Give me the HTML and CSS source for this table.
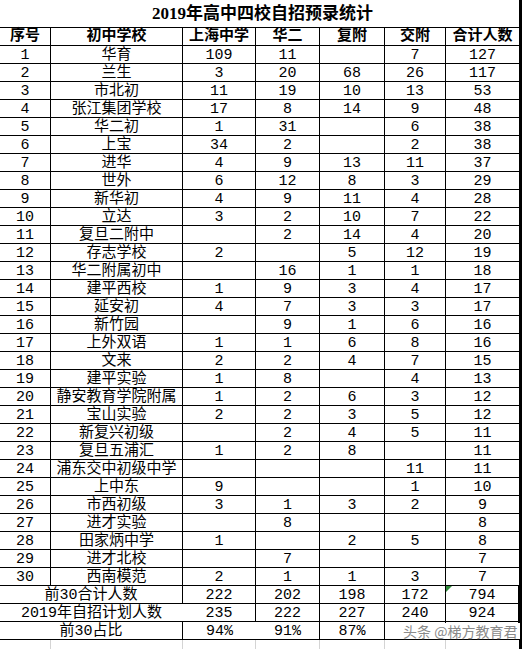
FILE: index.html
```html
<!DOCTYPE html>
<html lang="zh-CN">
<head>
<meta charset="utf-8">
<title>2019年高中四校自招预录统计</title>
<link rel="stylesheet" href="styles.css">
</head>
<body>
<div class="page">
  <div class="title">2019年高中四校自招预录统计</div>
  <div class="sheet">
    <div class="c h">序号</div><div class="c h">初中学校</div><div class="c h">上海中学</div><div class="c h">华二</div><div class="c h">复附</div><div class="c h">交附</div><div class="c h">合计人数</div>

    <div class="c">1</div><div class="c">华育</div><div class="c">109</div><div class="c">11</div><div class="c"></div><div class="c">7</div><div class="c">127</div>
    <div class="c">2</div><div class="c">兰生</div><div class="c">3</div><div class="c">20</div><div class="c">68</div><div class="c">26</div><div class="c">117</div>
    <div class="c">3</div><div class="c">市北初</div><div class="c">11</div><div class="c">19</div><div class="c">10</div><div class="c">13</div><div class="c">53</div>
    <div class="c">4</div><div class="c">张江集团学校</div><div class="c">17</div><div class="c">8</div><div class="c">14</div><div class="c">9</div><div class="c">48</div>
    <div class="c">5</div><div class="c">华二初</div><div class="c">1</div><div class="c">31</div><div class="c"></div><div class="c">6</div><div class="c">38</div>
    <div class="c">6</div><div class="c">上宝</div><div class="c">34</div><div class="c">2</div><div class="c"></div><div class="c">2</div><div class="c">38</div>
    <div class="c">7</div><div class="c">进华</div><div class="c">4</div><div class="c">9</div><div class="c">13</div><div class="c">11</div><div class="c">37</div>
    <div class="c">8</div><div class="c">世外</div><div class="c">6</div><div class="c">12</div><div class="c">8</div><div class="c">3</div><div class="c">29</div>
    <div class="c">9</div><div class="c">新华初</div><div class="c">4</div><div class="c">9</div><div class="c">11</div><div class="c">4</div><div class="c">28</div>
    <div class="c">10</div><div class="c">立达</div><div class="c">3</div><div class="c">2</div><div class="c">10</div><div class="c">7</div><div class="c">22</div>
    <div class="c">11</div><div class="c">复旦二附中</div><div class="c"></div><div class="c">2</div><div class="c">14</div><div class="c">4</div><div class="c">20</div>
    <div class="c">12</div><div class="c">存志学校</div><div class="c">2</div><div class="c"></div><div class="c">5</div><div class="c">12</div><div class="c">19</div>
    <div class="c">13</div><div class="c">华二附属初中</div><div class="c"></div><div class="c">16</div><div class="c">1</div><div class="c">1</div><div class="c">18</div>
    <div class="c">14</div><div class="c">建平西校</div><div class="c">1</div><div class="c">9</div><div class="c">3</div><div class="c">4</div><div class="c">17</div>
    <div class="c">15</div><div class="c">延安初</div><div class="c">4</div><div class="c">7</div><div class="c">3</div><div class="c">3</div><div class="c">17</div>
    <div class="c">16</div><div class="c">新竹园</div><div class="c"></div><div class="c">9</div><div class="c">1</div><div class="c">6</div><div class="c">16</div>
    <div class="c">17</div><div class="c">上外双语</div><div class="c">1</div><div class="c">1</div><div class="c">6</div><div class="c">8</div><div class="c">16</div>
    <div class="c">18</div><div class="c">文来</div><div class="c">2</div><div class="c">2</div><div class="c">4</div><div class="c">7</div><div class="c">15</div>
    <div class="c">19</div><div class="c">建平实验</div><div class="c">1</div><div class="c">8</div><div class="c"></div><div class="c">4</div><div class="c">13</div>
    <div class="c">20</div><div class="c">静安教育学院附属</div><div class="c">1</div><div class="c">2</div><div class="c">6</div><div class="c">3</div><div class="c">12</div>
    <div class="c">21</div><div class="c">宝山实验</div><div class="c">2</div><div class="c">2</div><div class="c">3</div><div class="c">5</div><div class="c">12</div>
    <div class="c">22</div><div class="c">新复兴初级</div><div class="c"></div><div class="c">2</div><div class="c">4</div><div class="c">5</div><div class="c">11</div>
    <div class="c">23</div><div class="c">复旦五浦汇</div><div class="c">1</div><div class="c">2</div><div class="c">8</div><div class="c"></div><div class="c">11</div>
    <div class="c">24</div><div class="c">浦东交中初级中学</div><div class="c"></div><div class="c"></div><div class="c"></div><div class="c">11</div><div class="c">11</div>
    <div class="c">25</div><div class="c">上中东</div><div class="c">9</div><div class="c"></div><div class="c"></div><div class="c">1</div><div class="c">10</div>
    <div class="c">26</div><div class="c">市西初级</div><div class="c">3</div><div class="c">1</div><div class="c">3</div><div class="c">2</div><div class="c">9</div>
    <div class="c">27</div><div class="c">进才实验</div><div class="c"></div><div class="c">8</div><div class="c"></div><div class="c"></div><div class="c">8</div>
    <div class="c">28</div><div class="c">田家炳中学</div><div class="c">1</div><div class="c"></div><div class="c">2</div><div class="c">5</div><div class="c">8</div>
    <div class="c">29</div><div class="c">进才北校</div><div class="c"></div><div class="c">7</div><div class="c"></div><div class="c"></div><div class="c">7</div>
    <div class="c">30</div><div class="c">西南模范</div><div class="c">2</div><div class="c">1</div><div class="c">1</div><div class="c">3</div><div class="c">7</div>

    <div class="c span2">前30合计人数</div><div class="c">222</div><div class="c">202</div><div class="c">198</div><div class="c">172</div><div class="c flag">794</div>
    <div class="c span2">2019年自招计划人数</div><div class="c">235</div><div class="c">222</div><div class="c">227</div><div class="c">240</div><div class="c">924</div>
    <div class="c span2">前30占比</div><div class="c">94%</div><div class="c">91%</div><div class="c">87%</div><div class="c"></div><div class="c"></div>

    <div class="e"></div><div class="e"></div><div class="e"></div><div class="e"></div><div class="e"></div><div class="e"></div><div class="e"></div>
  </div>
  <div class="watermark">头条 @梯方教育君</div>
</div>
</body>
</html>
```

FILE: styles.css
```css
html, body {
  margin: 0;
  padding: 0;
  background: #ffffff;
}

body {
  width: 524px;
  height: 649px;
  overflow: hidden;
  font-family: "Liberation Mono", "Noto Sans CJK SC", monospace;
  color: #000;
}

.page {
  position: relative;
  width: 519px;
  height: 649px;
  border-right: 3px solid #000;
}

.title {
  height: 27px;
  line-height: 28px;
  text-align: center;
  font-size: 17px;
  font-weight: bold;
  font-family: "Liberation Serif", "Noto Sans CJK SC", serif;
  padding-left: 6px;
  box-sizing: border-box;
}

.sheet {
  display: grid;
  grid-template-columns: 51px 132px 73px 64px 65px 61px 73px;
  grid-auto-rows: 18px;
  border-top: 1px solid #000;
}

.c {
  box-sizing: border-box;
  border-right: 1px solid #000;
  border-bottom: 1px solid #000;
  text-align: center;
  font-size: 15px;
  padding-top: 2px;
  line-height: 16px;
  white-space: nowrap;
}

.c:nth-child(7n) {
  border-right: none;
}

.h {
  font-weight: bold;
  padding-top: 1px;
}

.span2 {
  grid-column: span 2;
}

.flag {
  position: relative;
}

.flag::before {
  content: "";
  position: absolute;
  left: 0;
  top: 0;
  width: 0;
  height: 0;
  border-top: 6px solid #2e8b3a;
  border-right: 6px solid transparent;
}

.e {
  box-sizing: border-box;
  border-right: 1px solid #d4d4d4;
  height: 18px;
}

.e:last-child {
  border-right: none;
}

.watermark {
  position: absolute;
  left: 400px;
  top: 623px;
  height: 16px;
  padding: 0 3px;
  background: #ffffff;
  color: #8a8a8a;
  font-family: "Noto Sans CJK SC", sans-serif;
  font-size: 14px;
  line-height: 16px;
  white-space: nowrap;
  text-shadow: 0 0 1px #fff;
}
```
